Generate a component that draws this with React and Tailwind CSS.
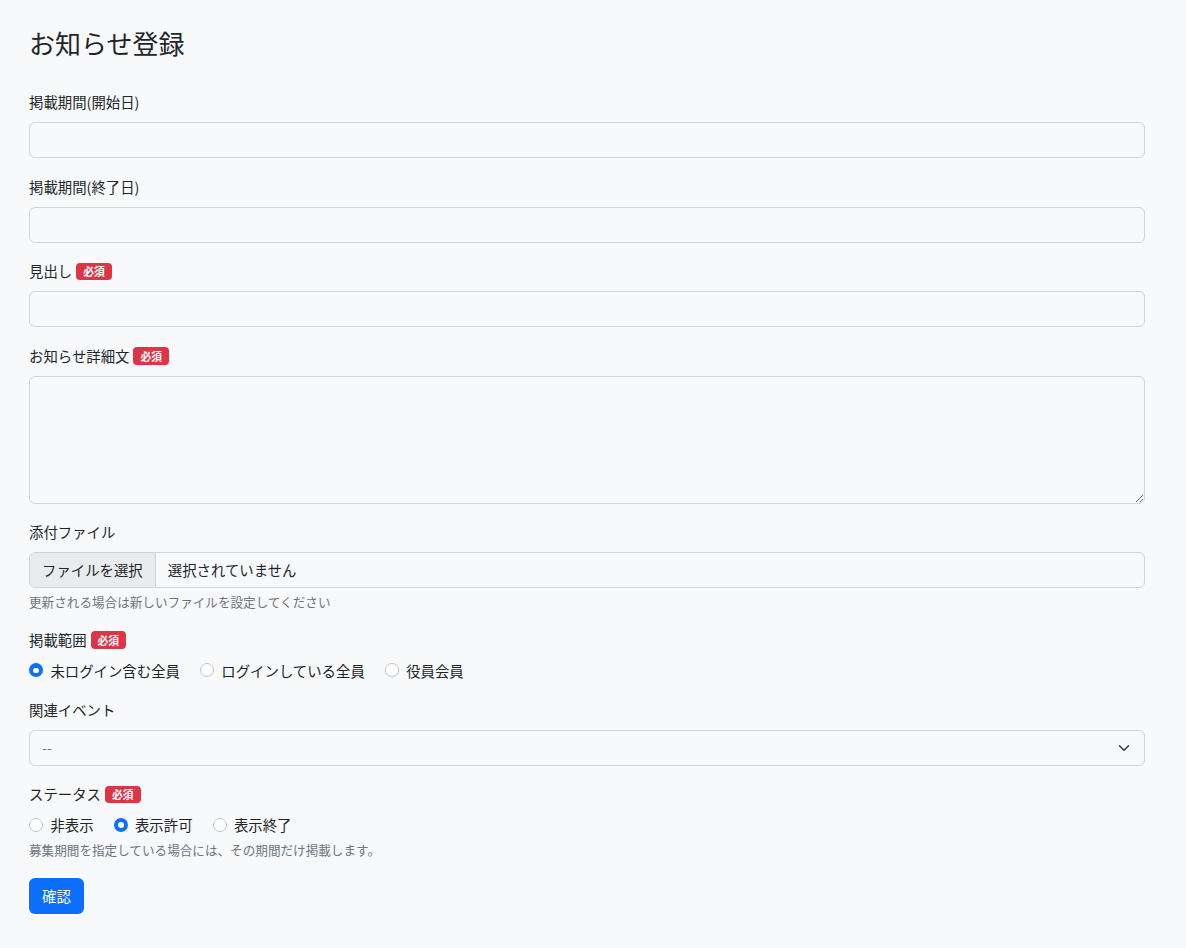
import React from "react";

const font = { fontFamily: '"Noto Sans CJK JP", "Noto Sans", sans-serif' };

function Badge() {
  return (
    <span className="ml-1 inline-block rounded-[4px] bg-[#dc3545] px-[7px] py-[3.5px] align-[1px] text-[10.8px] font-bold leading-none text-white">
      必須
    </span>
  );
}

function Label({ children, required }) {
  return (
    <div className="mb-[10px] h-[21px] text-[14.4px] leading-[21px] text-[#212529]">
      {children}
      {required && <Badge />}
    </div>
  );
}

function Radio({ checked, label }) {
  return (
    <label className="flex items-center gap-[7px] text-[14.4px] leading-[21.6px] text-[#212529]">
      {checked ? (
        <span className="flex h-[14.4px] w-[14.4px] items-center justify-center rounded-full bg-[#0d6efd]">
          <span className="h-[5.5px] w-[5.5px] rounded-full bg-white" />
        </span>
      ) : (
        <span className="h-[14.4px] w-[14.4px] rounded-full border border-[#bfc2c6] bg-white" />
      )}
      <span>{label}</span>
    </label>
  );
}

const inputCls =
  "block h-[36px] w-full rounded-[6px] border border-[#ced4da] bg-[#f8f9fa] px-3 text-[14.4px] outline-none";

export default function App() {
  return (
    <div className="min-h-[948px] bg-[#f8f9fa] text-[#212529]" style={font}>
      <div className="ml-[29px] w-[1116px] pt-[27px]">
        <h3 className="mb-[32px] h-[32px] text-[26px] font-normal leading-[32px]">お知らせ登録</h3>

        <div className="mb-[17.5px]">
          <Label>掲載期間(開始日)</Label>
          <input className={inputCls} />
        </div>

        <div className="mb-[17.5px]">
          <Label>掲載期間(終了日)</Label>
          <input className={inputCls} />
        </div>

        <div className="mb-[17.5px]">
          <Label required>見出し</Label>
          <input className={inputCls} />
        </div>

        <div className="mb-[17.5px]">
          <Label required>お知らせ詳細文</Label>
          <textarea className="block h-[128px] w-full rounded-[6px] border border-[#ced4da] bg-[#f8f9fa] px-3 py-[6px] text-[14.4px] outline-none" />
        </div>

        <div className="mb-[17.5px]">
          <Label>添付ファイル</Label>
          <div className="flex h-[36px] w-full overflow-hidden rounded-[6px] border border-[#ced4da] bg-[#f8f9fa] text-[14.4px]">
            <div className="flex items-center border-r border-[#ced4da] bg-[#e9ecef] px-3">ファイルを選択</div>
            <div className="flex items-center pl-3">選択されていません</div>
          </div>
          <div className="mt-1 text-[12.6px] leading-[19px] text-[#6c757d]">
            更新される場合は新しいファイルを設定してください
          </div>
        </div>

        <div className="mb-[17.5px]">
          <Label required>掲載範囲</Label>
          <div className="flex items-center gap-[20px]">
            <Radio checked label="未ログイン含む全員" />
            <Radio label="ログインしている全員" />
            <Radio label="役員会員" />
          </div>
        </div>

        <div className="mb-[17.5px]">
          <Label>関連イベント</Label>
          <div className="relative flex h-[36px] w-full items-center rounded-[6px] border border-[#ced4da] bg-[#f8f9fa] px-3 text-[14.4px] text-[#6c757d]">
            <span>--</span>
            <svg
              className="absolute right-[12px] top-1/2 -translate-y-1/2"
              width="16"
              height="12"
              viewBox="0 0 16 16"
              fill="none"
              stroke="#343a40"
              strokeWidth="2"
              strokeLinecap="round"
              strokeLinejoin="round"
            >
              <path d="m2 5 6 6 6-6" />
            </svg>
          </div>
        </div>

        <div className="mb-[19.5px]">
          <Label required>ステータス</Label>
          <div className="flex items-center gap-[20px]">
            <Radio label="非表示" />
            <Radio checked label="表示許可" />
            <Radio label="表示終了" />
          </div>
          <div className="mt-1 text-[12.6px] leading-[19px] text-[#6c757d]">
            募集期間を指定している場合には、その期間だけ掲載します。
          </div>
        </div>

        <button className="h-[36px] rounded-[6px] bg-[#0d6efd] px-[13px] text-[14.4px] text-white">確認</button>
      </div>
    </div>
  );
}
